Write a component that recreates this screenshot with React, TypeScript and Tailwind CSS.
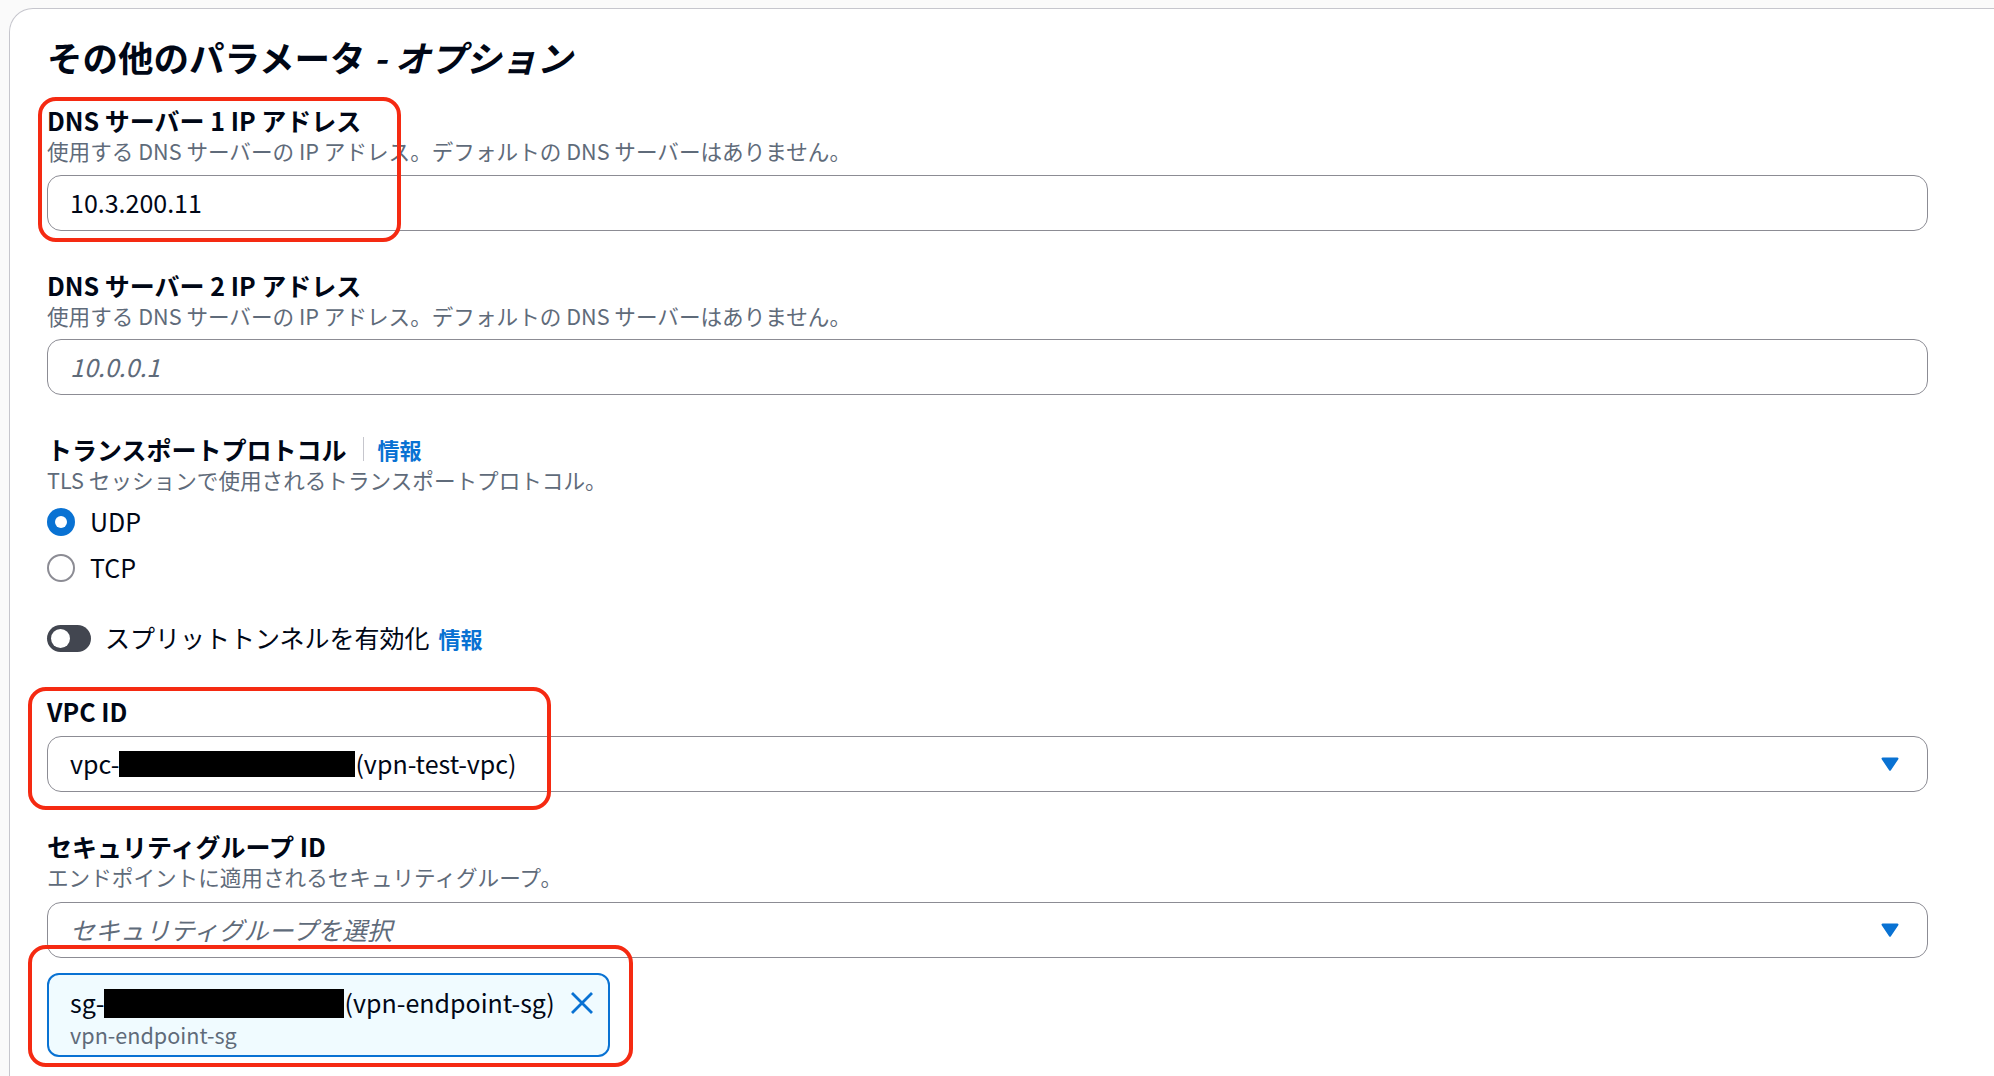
import React from "react";

const Info = () => (
  <span className="text-[22px] font-bold leading-[30px] text-[#0972d3]">情報</span>
);

const Caret = () => (
  <svg width="18" height="14" viewBox="0 0 18 14" className="shrink-0">
    <path
      d="M1.6 0.5h14.8a1.1 1.1 0 0 1 0.9 1.7l-7.4 11a1.1 1.1 0 0 1-1.8 0l-7.4-11a1.1 1.1 0 0 1 0.9-1.7z"
      fill="#0972d3"
    />
  </svg>
);

const Redacted: React.FC<{ w: number; h: number }> = ({ w, h }) => (
  <span className="inline-block bg-black" style={{ width: w, height: h }} />
);

type FieldProps = {
  label: React.ReactNode;
  description?: string;
  top: string;
};
const FieldHead: React.FC<FieldProps> = ({ label, description, top }) => (
  <div className={top}>
    <div className="flex h-[34px] items-center text-[25px] font-bold leading-[34px] text-[#000716]">
      {label}
    </div>
    {description && (
      <div className="text-[21.6px] leading-[28px] text-[#5f6b7a]">{description}</div>
    )}
  </div>
);

const Annotation: React.FC<{ className: string }> = ({ className }) => (
  <div
    className={
      "pointer-events-none absolute rounded-[18px] border-[4px] border-[#f52a12] " + className
    }
  />
);

export default function App() {
  return (
    <div className="relative h-[1076px] w-[1994px] overflow-hidden bg-[#fafafa] pl-[9px] pt-[8px] font-['Noto_Sans_CJK_JP','Noto_Sans',sans-serif] text-[#000716]">
      <div className="h-full rounded-tl-[24px] border-l border-t border-[#c6c6cd] bg-white pl-[37px]">
        <h2 className="pt-[26px] text-[35.5px] font-bold leading-[44px]">
          その他のパラメータ <span className="italic">- オプション</span>
        </h2>

        <FieldHead
          top="mt-[24px]"
          label="DNS サーバー 1 IP アドレス"
          description="使用する DNS サーバーの IP アドレス。デフォルトの DNS サーバーはありません。"
        />
        <div className="mt-[10px] flex h-[56px] w-[1881px] items-center rounded-[14px] border border-[#8c8c94] px-[22px] text-[25px]">
          10.3.200.11
        </div>

        <FieldHead
          top="mt-[37px]"
          label="DNS サーバー 2 IP アドレス"
          description="使用する DNS サーバーの IP アドレス。デフォルトの DNS サーバーはありません。"
        />
        <div className="mt-[9px] flex h-[56px] w-[1881px] items-center rounded-[14px] border border-[#8c8c94] px-[22px] text-[25px] italic text-[#5f6b7a]">
          10.0.0.1
        </div>

        <FieldHead
          top="mt-[37px]"
          label={
            <>
              <span>トランスポートプロトコル</span>
              <span className="ml-[16px] mr-[14px] h-[24px] w-px bg-[#c6c6cd]" />
              <Info />
            </>
          }
          description="TLS セッションで使用されるトランスポートプロトコル。"
        />
        <div className="mt-[8px] flex h-[40px] items-center gap-[15px] text-[25px]">
          <span className="flex h-[28px] w-[28px] items-center justify-center rounded-full bg-[#0972d3]">
            <span className="h-[12px] w-[12px] rounded-full bg-white" />
          </span>
          UDP
        </div>
        <div className="mt-[6px] flex h-[40px] items-center gap-[15px] text-[25px]">
          <span className="h-[28px] w-[28px] rounded-full border-2 border-[#8c8c94] bg-white" />
          TCP
        </div>

        <div className="mt-[30px] flex h-[40px] items-center text-[25px]">
          <span className="flex h-[27px] w-[44px] items-center rounded-full bg-[#424650] pl-[4px]">
            <span className="h-[19px] w-[19px] rounded-full bg-white" />
          </span>
          <span className="ml-[14px]">スプリットトンネルを有効化</span>
          <span className="ml-[9px]">
            <Info />
          </span>
        </div>

        <FieldHead top="mt-[36px]" label="VPC ID" />
        <div className="mt-[8px] flex h-[56px] w-[1881px] items-center rounded-[14px] border border-[#8c8c94] pl-[22px] pr-[28px] text-[25px]">
          <span className="flex flex-1 items-center">
            vpc-
            <Redacted w={236} h={26} />
            (vpn-test-vpc)
          </span>
          <Caret />
        </div>

        <FieldHead
          top="mt-[37px]"
          label="セキュリティグループ ID"
          description="エンドポイントに適用されるセキュリティグループ。"
        />
        <div className="mt-[11px] flex h-[56px] w-[1881px] items-center rounded-[14px] border border-[#8c8c94] pl-[22px] pr-[28px] text-[25px]">
          <span className="flex-1 italic text-[#5f6b7a]">セキュリティグループを選択</span>
          <Caret />
        </div>

        <div className="mt-[15px] flex h-[84px] w-[563px] items-start rounded-[12px] border-2 border-[#0972d3] bg-[#f0fbff] pl-[21px] pr-[14px] pt-[12px]">
          <div className="flex-1">
            <div className="flex h-[32px] items-center text-[25px]">
              sg-
              <Redacted w={240} h={29} />
              (vpn-endpoint-sg)
            </div>
            <div className="mt-[2px] text-[21.6px] leading-[28px] text-[#5f6b7a]">
              vpn-endpoint-sg
            </div>
          </div>
          <svg width="24" height="24" viewBox="0 0 24 24" className="mt-[4px] shrink-0">
            <path d="M2 2l20 20M22 2L2 22" stroke="#0972d3" strokeWidth="2.8" />
          </svg>
        </div>
      </div>

      <Annotation className="left-[38px] top-[97px] h-[145px] w-[363px]" />
      <Annotation className="left-[28px] top-[687px] h-[123px] w-[523px]" />
      <Annotation className="left-[28px] top-[945px] h-[122px] w-[605px]" />
    </div>
  );
}
